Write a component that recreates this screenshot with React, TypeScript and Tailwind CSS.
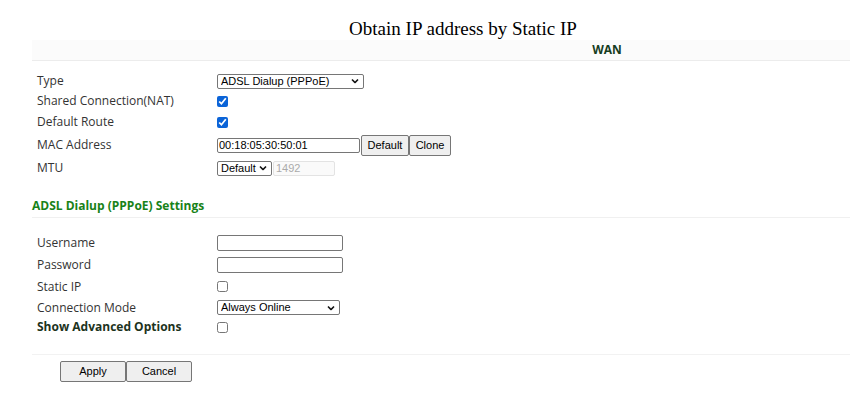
import React from 'react'

const labelFont = { fontFamily: '"Open Sans", "Noto Sans", sans-serif' }

const Chevron = () => (
  <svg width="8" height="5" viewBox="0 0 8 5" className="pointer-events-none absolute right-[5px] top-1/2 -translate-y-1/2">
    <path d="M1 1l3 3 3-3" fill="none" stroke="#111" strokeWidth="1.6" />
  </svg>
)

const FakeSelect = ({ value, options, className }: { value: string; options: string[]; className: string }) => (
  <div className={`relative ${className}`}>
    <select
      defaultValue={value}
      className="block h-full w-full appearance-none rounded-[2px] border border-[#767676] bg-white py-0 pl-[3px] text-[11px] leading-[13px] text-black outline-none"
    >
      {options.map((o) => (
        <option key={o} value={o}>
          {o}
        </option>
      ))}
    </select>
    <Chevron />
  </div>
)

const Row = ({ label, h, bold, children }: { label: string; h: string; bold?: boolean; children: React.ReactNode }) => (
  <div className={`flex items-center ${h}`}>
    <div
      style={labelFont}
      className={`w-[217px] shrink-0 pl-[37px] text-[12px] ${bold ? 'font-bold text-[#1d331d]' : 'text-[#333]'}`}
    >
      {label}
    </div>
    <div className="flex items-center">{children}</div>
  </div>
)

const Check = ({ checked }: { checked?: boolean }) => (
  <input type="checkbox" defaultChecked={checked} className="m-0 block h-[11px] w-[11px] accent-[#0b64d8]" />
)

const Btn = ({ children, className }: { children: React.ReactNode; className: string }) => (
  <button className={`rounded-[2px] border border-[#767676] bg-[#efefef] text-[11px] text-black ${className}`}>
    {children}
  </button>
)

export default function App() {
  return (
    <div
      className="relative h-[412px] w-[850px] overflow-hidden bg-white"
      style={{ fontFamily: '"Liberation Sans", Arial, sans-serif' }}
    >
      {/* TITLE */}
      <div
        className="w-[926px] pt-[17px] text-center text-[19px] leading-[23px] text-black"
        style={{ fontFamily: '"Liberation Serif", "Times New Roman", serif' }}
      >
        Obtain IP address by Static IP
      </div>

      {/* WAN BAND */}
      <div
        style={labelFont}
        className="ml-[32px] h-[21px] w-[1150px] border-b border-[#ececec] bg-[#fbfbfb] text-center text-[12px] font-bold leading-[20px] text-[#173d1f]"
      >
        WAN
      </div>

      <div className="mt-[10px]">
        <Row label="Type" h="h-[20px]">
          <FakeSelect value="ADSL Dialup (PPPoE)" options={['ADSL Dialup (PPPoE)', 'Static IP', 'DHCP']} className="h-[15px] w-[147px]" />
        </Row>
        <Row label="Shared Connection(NAT)" h="h-[20px]">
          <Check checked />
        </Row>
        <Row label="Default Route" h="h-[22px]">
          <Check checked />
        </Row>
        <Row label="MAC Address" h="h-[24px]">
          <input
            defaultValue="00:18:05:30:50:01"
            className="block h-[15px] w-[143px] rounded-[2px] border border-[#767676] px-[1px] text-[11px] text-black outline-none"
          />
          <Btn className="ml-px h-[21px] w-[48px]">Default</Btn>
          <Btn className="h-[21px] w-[42px]">Clone</Btn>
        </Row>
        <Row label="MTU" h="h-[22px]">
          <FakeSelect value="Default" options={['Default', 'Manual']} className="h-[15px] w-[55px]" />
          <input
            disabled
            defaultValue="1492"
            className="ml-px block h-[15px] w-[62px] rounded-[2px] border border-[#e3e3e3] bg-[#fafafa] px-[2px] text-[11px] text-[#aaa]"
          />
        </Row>
      </div>

      {/* SECTION HEADING */}
      <div
        style={labelFont}
        className="ml-[32px] mt-[19px] border-b border-[#f0f0f0] pb-[3px] text-[12px] font-bold leading-[16px] text-[#188218]"
      >
        ADSL Dialup (PPPoE) Settings
      </div>

      <div className="mt-[14px]">
        <Row label="Username" h="h-[21px]">
          <input className="block h-[16px] w-[126px] rounded-[2px] border border-[#767676] text-[11px] outline-none" />
        </Row>
        <Row label="Password" h="h-[23px]">
          <input type="password" className="block h-[16px] w-[126px] rounded-[2px] border border-[#767676] text-[11px] outline-none" />
        </Row>
        <Row label="Static IP" h="h-[21px]">
          <Check />
        </Row>
        <Row label="Connection Mode" h="h-[21px]">
          <FakeSelect
            value="Always Online"
            options={['Always Online', 'Connect on Demand', 'Manual']}
            className="h-[15px] w-[123px]"
          />
        </Row>
        <Row label="Show Advanced Options" h="h-[18px]" bold>
          <Check />
        </Row>
      </div>

      <div className="ml-[32px] mt-[18px] border-b border-[#f2f2f2]" />

      <div className="mt-[6px] flex pl-[60px]">
        <Btn className="h-[21px] w-[66px]">Apply</Btn>
        <Btn className="h-[21px] w-[66px]">Cancel</Btn>
      </div>
    </div>
  )
}
